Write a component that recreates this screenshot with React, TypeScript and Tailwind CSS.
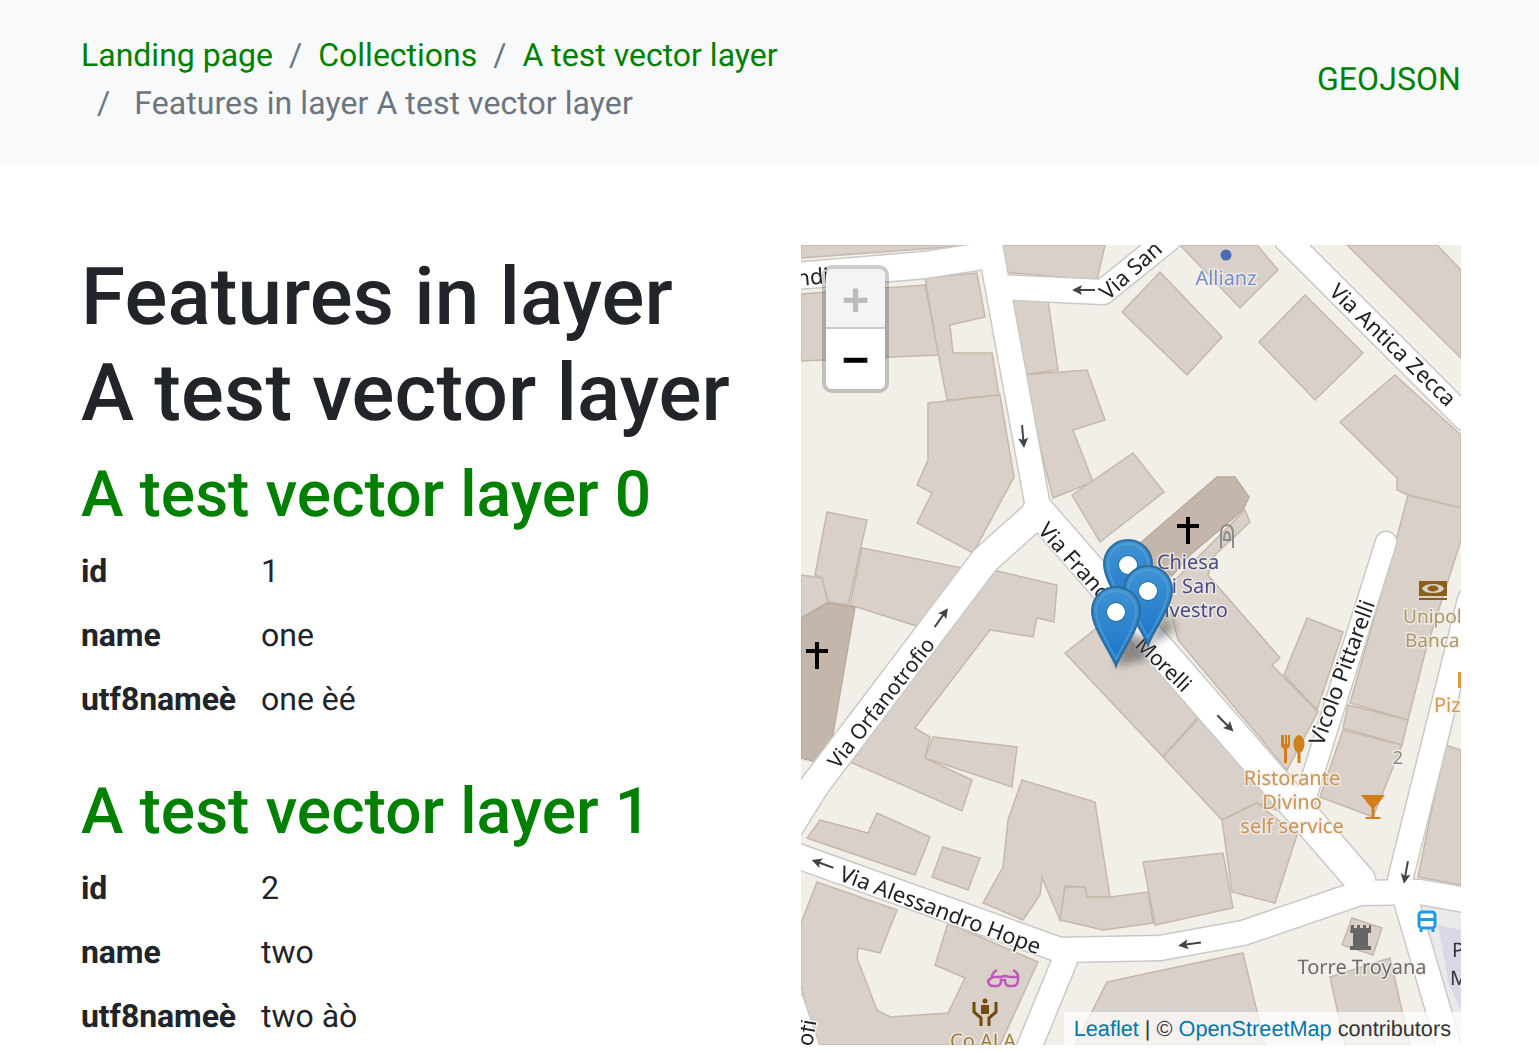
import React from 'react';

// Map shapes are in page coordinates, the svg viewBox starts at the map's corner
const buildings: string[] = [
  '801,245 975,245 801,258',
  '1002,245 1105,245 1097,280 1002,272',
  '801,294 925,285 939,355 801,361',
  '925,278 977,273 985,317 950,325 953,353 992,353 999,395 947,400 938,353',
  '928,403 1000,395 1014,477 973,553 917,523 932,493 917,485 928,460',
  '1007,298 1048,300 1058,370 1022,375',
  '1022,375 1087,370 1105,420 1073,430 1093,482 1053,498',
  '1072,495 1133,453 1164,492 1100,542',
  '1180,245 1257,245 1278,270 1240,308',
  '1160,272 1222,337 1187,375 1122,312',
  '1305,295 1363,353 1315,400 1259,342',
  '1347,245 1437,245 1461,270 1461,358',
  '1395,375 1461,435 1461,508 1408,495 1397,490 1397,478 1340,422',
  '1245,510 1250,522 1215,555 1208,575 1280,658 1272,665 1318,712 1287,770 1178,640 1165,590',
  '1307,618 1343,632 1317,710 1284,675',
  '1408,495 1461,508 1461,540 1425,653 1408,720 1350,703 1395,545',
  '1348,705 1408,720 1402,745 1343,728',
  '1343,730 1402,745 1373,817 1320,797',
  '1445,745 1461,750 1461,885 1418,877',
  '827,512 867,520 848,605 828,602 822,578 815,575',
  '862,548 962,568 920,627 850,605',
  '801,575 822,578 828,602 801,618',
  '993,570 1057,585 1054,622 1037,618 1033,637 990,630 915,728 930,737 925,758 972,780 962,811 850,762',
  '933,737 1017,747 1012,787 925,758',
  '1065,653 1113,615 1200,715 1163,757',
  '1163,757 1200,717 1290,815 1257,803 1222,820',
  '1257,803 1297,835 1275,903 1232,892 1222,820',
  '1022,780 1095,802 1110,897 1087,897 1085,887 1065,886 1060,920 1042,878 1040,895 1023,920 983,903 1003,867 1008,820',
  '1060,920 1065,887 1085,887 1087,897 1110,897 1148,892 1153,923 1103,930',
  '1143,862 1223,853 1233,908 1155,925',
  '820,820 868,833 877,813 897,822 930,837 915,875 807,838',
  '943,847 980,858 968,890 932,877',
  '817,882 897,910 880,953 858,948 857,958 877,1010 890,1017 948,1013 965,978 935,965 948,923 1038,962 1000,1045 815,1045 801,985 801,923',
  '1107,982 1243,953 1265,1045 1075,1045',
  '1330,977 1390,958 1410,1045 1345,1045',
  '1352,918 1382,928 1373,955 1342,945',
];

const darkBuildings: string[] = [
  '1138,545 1217,477 1235,477 1249,497 1243,510 1190,555 1160,590',
  '801,618 828,603 855,607 832,740 820,763 801,758',
];

const roads: { points: string; width: number }[] = [
  { points: '795,276 925,265 990,255', width: 26 },
  { points: '989,240 1038,507', width: 24 },
  { points: '1038,510 1360,880', width: 30 },
  { points: '1035,515 985,560 815,785 790,825', width: 28 },
  { points: '795,855 1060,950 1160,948 1243,933 1360,893 1420,892 1465,900', width: 24 },
  { points: '1470,600 1400,880 1450,1050', width: 24 },
  { points: '1386,542 1305,800', width: 20 },
  { points: '998,287 1103,292 1170,238', width: 24 },
  { points: '1287,240 1465,418', width: 24 },
  { points: '1065,960 1028,1050', width: 24 },
  { points: '795,1000 812,1050', width: 16 },
];

// direction arrows on the roads: x, y and the angle of the arrow
const arrows: [number, number, number][] = [
  [1084, 290, 180],
  [1023, 436, 85],
  [941, 618, -55],
  [1225, 723, 45],
  [1406, 872, 100],
  [1190, 944, 172],
  [823, 864, 200],
];

const Marker = ({ x, y }: { x: number; y: number }) => (
  <g transform={`translate(${x} ${y})`}>
    <path
      d="M0 0 C-4 -12 -24 -38 -24 -55 A24 24 0 1 1 24 -55 C24 -38 4 -12 0 0 Z"
      fill="url(#markerFill)"
      stroke="#2e6d9b"
      strokeWidth="2"
    />
    <path
      d="M0 -7 C-5 -18 -20 -40 -20 -55 A20 20 0 1 1 20 -55 C20 -40 5 -18 0 -7 Z"
      fill="none"
      stroke="#5ba6dc"
      strokeOpacity="0.55"
      strokeWidth="2"
    />
    <circle cx="0" cy="-54" r="10" fill="#2a6f9f" />
    <circle cx="0" cy="-54" r="9" fill="#ffffff" />
  </g>
);

const Label = ({
  x,
  y,
  angle = 0,
  size = 20,
  color = '#222222',
  anchor = 'start',
  halo = '#ffffff',
  children,
}: {
  x: number;
  y: number;
  angle?: number;
  size?: number;
  color?: string;
  anchor?: 'start' | 'middle';
  halo?: string;
  children: React.ReactNode;
}) => (
  <text
    transform={`translate(${x} ${y}) rotate(${angle})`}
    fontFamily="'Noto Sans', sans-serif"
    fontSize={size}
    fill={color}
    stroke={halo}
    strokeWidth="3"
    strokeOpacity="0.75"
    paintOrder="stroke"
    textAnchor={anchor}
  >
    {children}
  </text>
);

const MapDrawing = () => (
  <svg viewBox="801 245 660 800" className="block w-[660px] h-[800px] blur-[0.7px]">
    <defs>
      <linearGradient id="markerFill" x1="0" y1="0" x2="0" y2="1">
        <stop offset="0" stopColor="#3f94d3" />
        <stop offset="1" stopColor="#1c74c8" />
      </linearGradient>
      <filter id="soft" x="-30%" y="-30%" width="160%" height="160%">
        <feGaussianBlur stdDeviation="4" />
      </filter>
    </defs>

    <rect x="801" y="245" width="660" height="800" fill="#f2efe9" />

    {/* parking lot and footway on the right */}
    <polygon points="1418,905 1461,915 1461,1045 1440,1045" fill="#eaeaea" />
    <polygon points="1438,925 1461,930 1461,1010 1449,985" fill="#d8d8e6" />

    {buildings.map((points) => (
      <polygon key={points} points={points} fill="#d9d0c9" stroke="#c6b8ab" strokeWidth="1.5" />
    ))}
    {darkBuildings.map((points) => (
      <polygon key={points} points={points} fill="#c4b6ab" stroke="#bbab9f" strokeWidth="1.5" />
    ))}

    {roads.map((r) => (
      <polyline
        key={`casing-${r.points}`}
        points={r.points}
        fill="none"
        stroke="#c9c9c6"
        strokeWidth={r.width + 3}
        strokeLinecap="round"
        strokeLinejoin="round"
      />
    ))}
    {roads.map((r) => (
      <polyline
        key={r.points}
        points={r.points}
        fill="none"
        stroke="#ffffff"
        strokeWidth={r.width}
        strokeLinecap="round"
        strokeLinejoin="round"
      />
    ))}

    {arrows.map(([x, y, angle]) => (
      <g key={`${x}-${y}`} transform={`translate(${x} ${y}) rotate(${angle})`}>
        <path d="M-11 0 H6" stroke="#444444" strokeWidth="2" />
        <path d="M12 0 L2 -5 L4 0 L2 5 Z" fill="#444444" />
      </g>
    ))}

    {/* road names */}
    <Label x={838} y={880} angle={20.5} size={22}>Via Alessandro Hope</Label>
    <Label x={1108} y={301} angle={-42} size={22}>Via San</Label>
    <Label x={1328} y={293} angle={44} size={22}>Via Antica Zecca</Label>
    <Label x={838} y={770} angle={-52} size={21}>Via Orfanotrofio</Label>
    <Label x={1037} y={531} angle={48} size={22}>Via Franc</Label>
    <Label x={1134} y={646} angle={44} size={21}>Morelli</Label>
    <Label x={1323} y={747} angle={-70} size={22}>Vicolo Pittarelli</Label>
    <Label x={797} y={286} angle={-5} size={22}>ndi</Label>
    <Label x={812} y={1047} angle={-80} size={22}>ofi</Label>

    {/* places */}
    <circle cx="1226" cy="255" r="5.5" fill="#4a6cb3" />
    <Label x={1226} y={285} color="#7690c6" anchor="middle" halo="#f2efe9">Allianz</Label>

    <path d="M1186 517 h4 v7 h9 v4 h-9 v16 h-4 v-16 h-9 v-4 h9 Z" fill="#000000" />
    <path d="M815 642 h4 v7 h9 v4 h-9 v16 h-4 v-16 h-9 v-4 h9 Z" fill="#000000" />
    <path
      d="M1221 548 V534 Q1221 525 1227 525 Q1233 525 1233 534 V548 M1224 540 Q1224 532 1227 532 Q1230 532 1230 540 Z"
      fill="none"
      stroke="#8b8b8b"
      strokeWidth="2"
    />
    <Label x={1188} y={569} color="#4b4b85" anchor="middle" halo="#f2efe9">Chiesa</Label>
    <Label x={1188} y={593} color="#4b4b85" anchor="middle" halo="#f2efe9">di San</Label>
    <Label x={1188} y={617} color="#4b4b85" anchor="middle" halo="#f2efe9">Silvestro</Label>

    {/* fork and spoon */}
    <path
      d="M1281 735 v9 q0 4 3 5 v14 h3 v-14 q3 -1 3 -5 v-9 h-2 v9 h-1 v-9 h-2 v9 h-1 v-9 Z"
      fill="#d17f1a"
    />
    <ellipse cx="1299" cy="744" rx="5.5" ry="9" fill="#d17f1a" />
    <rect x="1297.5" y="750" width="3" height="13" fill="#d17f1a" />
    <Label x={1292} y={785} color="#cc9353" anchor="middle" halo="#f2efe9">Ristorante</Label>
    <Label x={1292} y={809} color="#cc9353" anchor="middle" halo="#f2efe9">Divino</Label>
    <Label x={1292} y={833} color="#cc9353" anchor="middle" halo="#f2efe9">self service</Label>

    {/* martini glass */}
    <path d="M1361 795 h24 l-10.5 13 v9 h6 v2 h-15 v-2 h6 v-9 Z" fill="#d17f1a" />

    {/* bank */}
    <path
      fillRule="evenodd"
      d="M1419 581 h28 v15 h-28 Z M1433 584 q-9 0 -11 4.5 q2 4.500 11 4.500 q9 0 11 -4.500 q-2 -4.500 -11 -4.500 Z"
      fill="#8a5f17"
    />
    <ellipse cx="1433" cy="588.500" rx="5.500" ry="3" fill="#8a5f17" />
    <rect x="1419" y="598" width="28" height="2" fill="#8a5f17" />
    <Label x={1403} y={623} size={19} color="#ae9868" halo="#f2efe9">Unipol</Label>
    <Label x={1405} y={647} size={19} color="#ae9868" halo="#f2efe9">Banca</Label>
    <Label x={1434} y={712} color="#d39a4f" halo="#f2efe9">Piz</Label>
    <rect x="1458" y="672" width="3" height="16" fill="#e09a3a" />
    <Label x={1398} y={764} size={18} color="#8a8a8a" anchor="middle" halo="#f2efe9">2</Label>

    {/* bus stop */}
    <rect x="1419" y="912" width="16" height="16" rx="3" fill="#ffffff" stroke="#1f9ae6" strokeWidth="3" />
    <rect x="1419" y="918" width="16" height="3" fill="#1f9ae6" />
    <path d="M1421 929 v3 M1433 929 v3" stroke="#1f9ae6" strokeWidth="3" />

    {/* tower */}
    <path
      d="M1351 925 h3 v3 h3 v-3 h3 v3 h3 v-3 h3 v3 h3 v-3 h2 v8 h-3 v13 h3 v4 h-21 v-4 h3 v-13 h-3 Z"
      fill="#666666"
    />
    <Label x={1362} y={974} color="#6d6d6d" anchor="middle" halo="#f2efe9">Torre Troyana</Label>

    <Label x={1452} y={957} color="#333333" halo="#d8d8e6">P</Label>
    <Label x={1450} y={985} color="#333333" halo="#d8d8e6">M</Label>

    {/* optician */}
    <path
      d="M992 979 q-1 -6 5 -9 M1018 979 q1 -6 -5 -9 M992 977 h9 q4 -2 8 0 h9 v4 q-1 5 -5 5 h-4 q-4 0 -4 -6 h-4 q0 6 -4 6 h-4 q-4 0 -5 -5 Z"
      fill="none"
      stroke="#bf56b9"
      strokeWidth="2.5"
    />

    {/* social facility */}
    <circle cx="985" cy="1001" r="2.500" fill="#734a08" />
    <rect x="981" y="1005" width="8" height="9" fill="#734a08" />
    <path
      d="M974 1002 V1012 L981 1018 V1026 M996 1002 V1012 L989 1018 V1026"
      fill="none"
      stroke="#734a08"
      strokeWidth="3"
    />
    <Label x={983} y={1048} color="#9e7e3f" anchor="middle" halo="#f2efe9">Co ALA</Label>

    {/* marker shadows then markers */}
    <path d="M1116 666 L1146 660 L1150 640 L1125 630 Z M1148 646 L1176 630 L1165 610 Z" fill="#3d3d3d" opacity="0.5" filter="url(#soft)" />
    <Marker x={1128} y={619} />
    <Marker x={1148} y={645} />
    <Marker x={1116} y={666} />
  </svg>
);

const Feature = ({ title, rows, className }: { title: string; rows: [string, string][]; className?: string }) => (
  <section className={className}>
    <h2 className="text-[64px] leading-[76.8px] font-medium tracking-[0.05px] text-[#008000] mb-[5px]">{title}</h2>
    <table className="border-collapse">
      <tbody>
        {rows.map(([key, value]) => (
          <tr key={key}>
            <th className="w-[180px] py-2 pr-6 text-left font-bold tracking-[-0.1px] whitespace-nowrap">{key}</th>
            <td className="py-2">{value}</td>
          </tr>
        ))}
      </tbody>
    </table>
  </section>
);

export default function App() {
  return (
    <div className="h-[1054px] overflow-hidden bg-white font-['Roboto',sans-serif] text-[32px] leading-[48px] text-[#212529] [text-rendering:geometricPrecision]">
      <header className="bg-[#f8f9fa] pl-[81px] pr-[78px] pt-[31px] pb-[38px] flex items-center justify-between">
        <ol className="flex flex-wrap w-[1000px]">
          <li><a className="text-[#008000]">Landing page</a></li>
          <li className="pl-4"><span className="pr-4 text-[#6c757d]">/</span><a className="text-[#008000]">Collections</a></li>
          <li className="pl-4"><span className="pr-4 text-[#6c757d]">/</span><a className="text-[#008000]">A test vector layer</a></li>
          <li className="pl-4 text-[#6c757d] tracking-[0.07px]"><span className="pr-4">/</span> Features in layer A test vector layer</li>
        </ol>
        <a className="text-[#008000] tracking-[0.07px]">GEOJSON</a>
      </header>

      <main className="flex justify-between pl-[81px] pr-[78px] pt-[80px]">
        <div className="w-[690px] pt-1">
          <h1 className="text-[80px] leading-[96px] font-medium tracking-[0.16px] mb-4">
            Features in layer
            <br />
            A test vector layer
          </h1>
          <Feature
            title="A test vector layer 0"
            rows={[['id', '1'], ['name', 'one'], ['utf8nameè', 'one èé']]}
            className="mb-[43px]"
          />
          <Feature
            title="A test vector layer 1"
            rows={[['id', '2'], ['name', 'two'], ['utf8nameè', 'two àò']]}
          />
        </div>

        <div className="relative w-[660px] h-[800px] overflow-hidden">
          <MapDrawing />
          <div className="absolute left-[21px] top-5 w-[67px] rounded-[10px] border-4 border-black/20">
            <div className="h-[60px] rounded-t-md bg-[#f4f4f4] border-b-2 border-[#ccc] text-center font-['DejaVu_Sans_Mono',monospace] font-bold text-[44px] leading-[62px] text-[#bbb]">+</div>
            <div className="h-[60px] rounded-b-md bg-white text-center font-['DejaVu_Sans_Mono',monospace] font-bold text-[44px] leading-[62px] text-black">−</div>
          </div>
          <div className="absolute right-0 bottom-0 h-[33px] bg-white/70 px-2.5 font-['Liberation_Sans',sans-serif] text-[21.7px] leading-[33px] text-[#333]">
            <a className="text-[#0078a8]">Leaflet</a> | © <a className="text-[#0078a8]">OpenStreetMap</a> contributors
          </div>
        </div>
      </main>
    </div>
  );
}
